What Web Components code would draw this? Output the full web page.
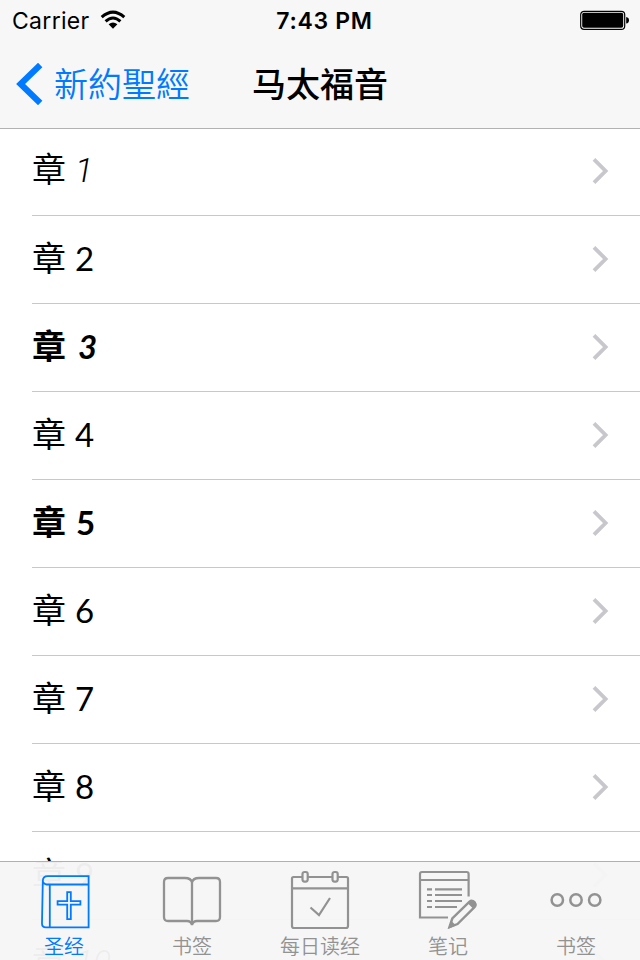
<!DOCTYPE html>
<html lang="zh-Hans">
<head>
<meta charset="utf-8">
<title>马太福音</title>
<style>
html,body{margin:0;padding:0}
body{width:640px;height:960px;overflow:hidden;background:#fff;color:#000;font-family:"Noto Sans CJK SC",sans-serif}
</style>
</head>
<body>
<bible-app></bible-app>
<script>
class Base extends HTMLElement {
  connectedCallback() {
    if (this.shadowRoot) return;
    this.attachShadow({ mode: 'open' }).innerHTML = this.render();
  }
}

customElements.define('status-bar', class extends Base {
  render() {
    return `<style>
:host{display:grid;grid-template-columns:1fr auto 1fr;align-items:center;height:42px;font:400 23px/40px Inter,sans-serif}
.l{display:flex;align-items:center;gap:10px;padding-left:12px}
.c{letter-spacing:.3px}
.t{font-weight:600;font-size:23px;letter-spacing:.7px;padding-left:9px}
.r{display:flex;justify-content:flex-end;padding-right:10px}
svg{display:block;margin-top:-2px}
</style>
<div class="l"><span class="c">Carrier</span>
<svg width="26" height="20" viewBox="0 0 26 20"><g fill="none" stroke="#000" stroke-width="3"><path d="M1.700 7.200Q13-3 24.300 7.200"/><path d="M5.600 11.400Q13 4.700 20.400 11.400"/></g><path d="M8.600 14.300Q13 10.900 17.400 14.300L13 18.800Z"/></svg></div>
<span class="t">7:43 PM</span>
<div class="r"><svg width="50" height="20" viewBox="0 0 50 20"><rect x=".7" y="1.300" width="44" height="18" rx="3.400" fill="#fff" stroke="#000" stroke-width="1.200"/><rect x="2.200" y="2.800" width="41" height="15" rx="1.800"/><path d="M46.200 7Q49 7.500 49 10.300Q49 13.100 46.200 13.600Z"/></svg></div>`;
  }
});

customElements.define('nav-bar', class extends Base {
  render() {
    return `<style>
:host{display:grid;grid-template-columns:1fr auto 1fr;align-items:center;height:84px;font-size:34px;line-height:50px}
.back{display:flex;align-items:center;gap:11px;padding-left:16px;color:#007aff;font-family:"Noto Sans CJK TC",sans-serif;font-weight:350}
.title,.text{margin-top:-2px}
.title{font-weight:500}
svg{display:block}
</style>
<div class="back"><svg width="27" height="42" viewBox="0 0 27 42"><path d="M24.200 2L4.600 21L24.200 40" fill="none" stroke="#007aff" stroke-width="6.200"/></svg><div class="text"><slot name="back"></slot></div></div>
<div class="title"><slot></slot></div>`;
  }
});

customElements.define('top-bar', class extends Base {
  render() {
    return `<style>:host{display:block;background:#f7f7f7;height:128px;box-shadow:0 1px #b2b2b2;position:relative;z-index:1}</style><slot></slot>`;
  }
});

customElements.define('chapter-row', class extends Base {
  render() {
    const kind = this.getAttribute('kind') || 'regular';
    return `<style>
:host{display:block;padding-left:32px}
.row{display:flex;align-items:center;box-sizing:border-box;height:88px;border-bottom:1px solid #c8c7cc;padding:0 31px 2px 0}
.label{flex:1;display:flex;align-items:baseline;gap:9px;font-size:34px;line-height:50px;padding-bottom:3px}
.n{font-family:Lato,sans-serif;font-size:33px}
.light{font-weight:350}
.light .n{font-family:Roboto,sans-serif;font-style:italic;font-weight:300;font-size:33.500px}
.bold{font-weight:700}
.bold .n{font-weight:700;margin-left:1px}
.bolditalic{font-weight:700}
.bolditalic .n{font-style:italic;font-weight:700;margin-left:3px}
svg{display:block}
</style>
<div class="row"><div class="label ${kind}"><span>章</span><span class="n"><slot></slot></span></div>
<svg width="18" height="28" viewBox="0 0 18 28"><path d="M3 2.400L14.600 14L3 25.600" fill="none" stroke="#c7c7cc" stroke-width="3.800"/></svg></div>`;
  }
});

customElements.define('tab-item', class extends Base {
  render() {
    const icons = {
      bible: '<g transform="translate(3.800 -.1)" stroke-width="1.800"><path d="M52.800 6.200H12Q7 6.200 7 11L6.200 53.600Q6.200 57.400 10 57.400H52.800ZM52.200 14.600H11Q7 14 7 10.600M14 14.600V57.400"/><path d="M31.400 22.300h3.600v8.900h9.600v3.600H35v14.500H31.400V34.800h-9.600V31.200h9.600Z"/></g>',
      book: '<path stroke-width="2.300" d="M32 12.500Q31 8 25 8H8Q4 8 4 12V47Q4 51 8 51H27Q31 51 32 55Q33 51 37 51H56Q60 51 60 47V12Q60 8 56 8H39Q33 8 32 12.500V54"/>',
      calendar: '<g stroke-width="2.200"><path d="M15 7H5.500Q4 7 4 8.500V56Q4 58 6 58H58Q60 58 60 56V8.500Q60 7 58.500 7H50M20 7H45M4 18.400H60M22.500 37.500L31 45L42 28"/><rect x="14.500" y="2" width="5.200" height="9.600" rx="2"/><rect x="44.500" y="2" width="5.200" height="9.600" rx="2"/></g>',
      notes: '<g stroke-width="2.200"><path d="M52.600 26.500V4Q52.600 2 50.600 2H6Q4 2 4 4V47.500H32M4 10H52.600"/><path d="M11 19.400h5M19 19.400H46M11 25h5M19 25H46M11 31h5M19 31H46M11 37h5M19 37H41"/><path stroke-width="2.400" d="M33.500 57L36.300 48.500L53.500 31.600Q56 29.800 58.500 32.400Q60.500 35 58.500 37.200L41.500 54Z"/></g><path fill="#929292" stroke="none" d="M32 59L35.500 51L40 55.500ZM51.500 33L55 30.500Q60 29.500 60.500 35L57.500 39Z"/>',
      more: '<g stroke-width="2.500"><circle cx="13.300" cy="30" r="5.700"/><circle cx="32" cy="30" r="5.700"/><circle cx="50.700" cy="30" r="5.700"/></g>'
    };
    return `<style>
:host{display:flex;flex-direction:column;align-items:center;padding-top:8px;color:#929292;font-weight:350;font-size:20px;line-height:28px}
:host([active]){color:#007aff}
svg{display:block;margin-bottom:2px}
</style><svg width="64" height="60" viewBox="0 0 64 60" fill="none" stroke="currentColor">${icons[this.getAttribute('icon')]}</svg><span><slot></slot></span>`;
  }
});

customElements.define('tab-bar', class extends Base {
  render() {
    return `<style>
:host{position:absolute;left:0;bottom:0;width:640px;height:99px;box-sizing:border-box;border-top:1px solid #b0b0b0;background:rgba(246,246,246,.965);background-clip:padding-box;display:grid;grid-template-columns:repeat(5,1fr)}
</style><slot></slot>`;
  }
});

customElements.define('bible-app', class extends Base {
  render() {
    const kinds = { 1: 'light', 3: 'bolditalic', 5: 'bold', 10: 'light' };
    const rows = Array.from({ length: 10 }, (_, i) => `<chapter-row kind="${kinds[i + 1] || 'regular'}">${i + 1}</chapter-row>`).join('');
    return `<style>:host{display:block;position:relative;width:640px;height:960px;overflow:hidden;background:#fff}</style>
<top-bar><status-bar></status-bar><nav-bar><span slot="back">新約聖經</span>马太福音</nav-bar></top-bar>
<main>${rows}</main>
<tab-bar>
<tab-item icon="bible" active>圣经</tab-item>
<tab-item icon="book">书签</tab-item>
<tab-item icon="calendar">每日读经</tab-item>
<tab-item icon="notes">笔记</tab-item>
<tab-item icon="more">书签</tab-item>
</tab-bar>`;
  }
});
</script>
</body>
</html>
